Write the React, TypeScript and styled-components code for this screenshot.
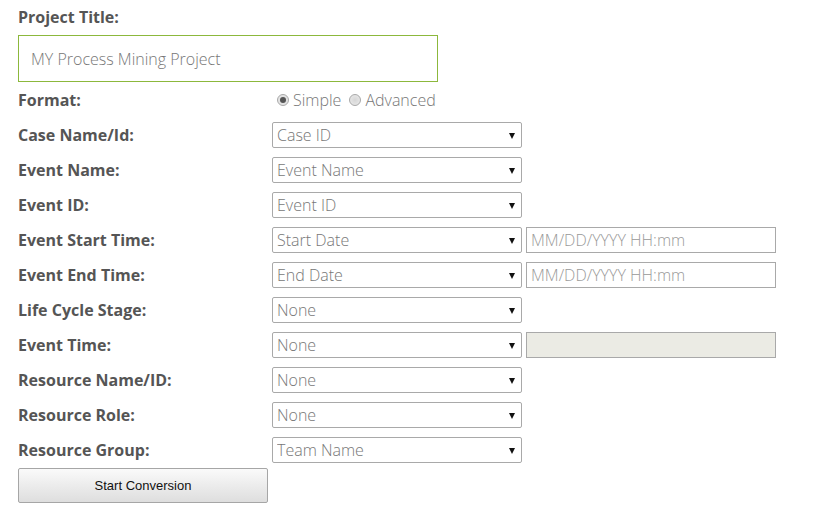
import React from "react";
import styled, { createGlobalStyle } from "styled-components";

const GlobalStyle = createGlobalStyle`
  body {
    margin: 0;
    background: #fff;
    font-family: "Open Sans", "Liberation Sans", sans-serif;
  }
`;

const Page = styled.div`
  padding: 8px 18px 0 18px;
  width: 794px;
`;

const TitleLabel = styled.div`
  font-size: 16px;
  font-weight: 700;
  color: #555;
  line-height: 18px;
  height: 18px;
`;

const TitleInput = styled.input`
  display: block;
  box-sizing: border-box;
  margin-top: 9px;
  width: 420px;
  height: 47px;
  border: 1px solid #8cb83c;
  padding: 0 12px;
  font-family: "Open Sans", "Liberation Sans", sans-serif;
  font-size: 16px;
  font-weight: 300;
  color: #777;
  outline: none;
`;

const Form = styled.div`
  display: grid;
  grid-template-columns: 254px 250px 4px 250px;
  grid-auto-rows: 26px;
  row-gap: 9px;
  margin-top: 5px;
`;

const Label = styled.div`
  grid-column: 1;
  display: flex;
  align-items: center;
  padding-bottom: 1px;
  font-size: 16px;
  font-weight: 700;
  color: #555;
`;

const RadioGroup = styled.div`
  grid-column: 2 / span 3;
  display: flex;
  align-items: center;
  padding-left: 5px;
  font-size: 16px;
  font-weight: 300;
  color: #777;
`;

const RadioOption = styled.label`
  display: flex;
  align-items: center;
  margin-right: 8px;
`;

const RadioDot = styled.span<{ checked?: boolean }>`
  box-sizing: border-box;
  width: 12px;
  height: 12px;
  border-radius: 50%;
  border: 1px solid #a8a8a8;
  background: radial-gradient(circle, #d6d6d6 0%, #ececec 100%);
  margin-right: 4px;
  display: flex;
  align-items: center;
  justify-content: center;
  &::after {
    content: "";
    display: ${({ checked }) => (checked ? "block" : "none")};
    width: 6px;
    height: 6px;
    border-radius: 50%;
    background: #555;
  }
`;

const SelectWrap = styled.div`
  grid-column: 2;
  position: relative;
  &::after {
    content: "";
    position: absolute;
    right: 7px;
    top: 11px;
    border-left: 3.5px solid transparent;
    border-right: 3.5px solid transparent;
    border-top: 6px solid #111;
    pointer-events: none;
  }
`;

const Select = styled.select`
  appearance: none;
  box-sizing: border-box;
  width: 250px;
  height: 26px;
  border: 1px solid #a9a9a9;
  border-radius: 2px;
  background: #fff;
  padding: 0 0 0 4px;
  font-family: "Open Sans", "Liberation Sans", sans-serif;
  font-size: 16px;
  font-weight: 300;
  color: #777;
  outline: none;
`;

const TextInput = styled.input<{ disabled?: boolean }>`
  grid-column: 4;
  box-sizing: border-box;
  width: 250px;
  height: 26px;
  border: 1px solid #a9a9a9;
  background: ${({ disabled }) => (disabled ? "#ebebe4" : "#fff")};
  padding: 0 4px;
  font-family: "Open Sans", "Liberation Sans", sans-serif;
  font-size: 16px;
  font-weight: 300;
  color: #777;
  outline: none;
  &::placeholder {
    color: #999;
  }
`;

const Button = styled.button`
  display: block;
  margin-top: 5px;
  width: 250px;
  height: 35px;
  border: 1px solid #a6a6a6;
  border-radius: 2px;
  background: linear-gradient(#fafafa, #dedede);
  font-family: "Liberation Sans", Arial, sans-serif;
  font-size: 13px;
  color: #111;
`;

type Row = { label: string; value: string; extra?: "date" | "disabled" };

const rows: Row[] = [
  { label: "Case Name/Id:", value: "Case ID" },
  { label: "Event Name:", value: "Event Name" },
  { label: "Event ID:", value: "Event ID" },
  { label: "Event Start Time:", value: "Start Date", extra: "date" },
  { label: "Event End Time:", value: "End Date", extra: "date" },
  { label: "Life Cycle Stage:", value: "None" },
  { label: "Event Time:", value: "None", extra: "disabled" },
  { label: "Resource Name/ID:", value: "None" },
  { label: "Resource Role:", value: "None" },
  { label: "Resource Group:", value: "Team Name" },
];

export default function App() {
  return (
    <Page>
      <GlobalStyle />
      <TitleLabel>Project Title:</TitleLabel>
      <TitleInput defaultValue="MY Process Mining Project" />
      <Form>
        <Label>Format:</Label>
        <RadioGroup>
          <RadioOption>
            <RadioDot checked />
            Simple
          </RadioOption>
          <RadioOption>
            <RadioDot />
            Advanced
          </RadioOption>
        </RadioGroup>
        {rows.map((r) => (
          <React.Fragment key={r.label}>
            <Label>{r.label}</Label>
            <SelectWrap>
              <Select defaultValue={r.value}>
                <option>{r.value}</option>
              </Select>
            </SelectWrap>
            {r.extra === "date" && <TextInput placeholder="MM/DD/YYYY HH:mm" />}
            {r.extra === "disabled" && <TextInput disabled />}
          </React.Fragment>
        ))}
      </Form>
      <Button>Start Conversion</Button>
    </Page>
  );
}
